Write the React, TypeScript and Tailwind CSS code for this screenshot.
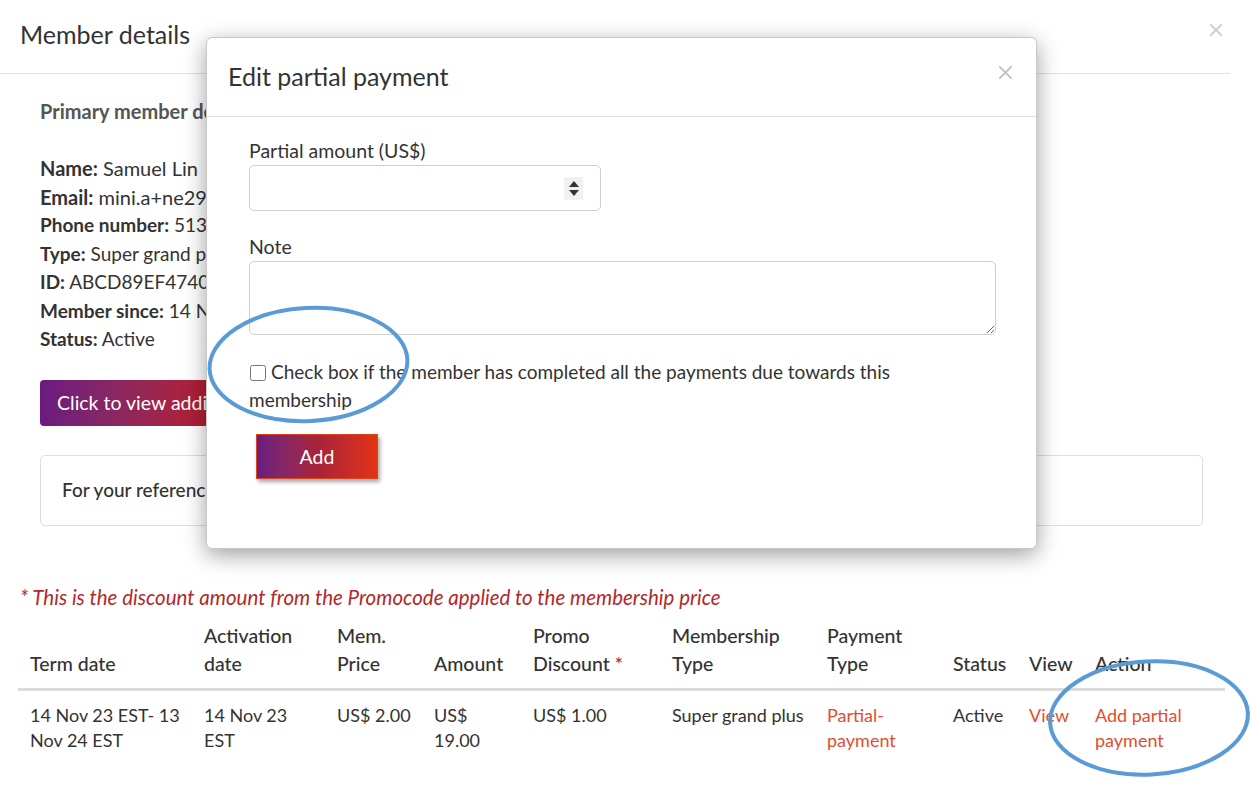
import React from 'react'

const cols = [174, 133, 97, 99, 139, 155, 126, 76, 66, 142]

function CloseIcon({ className }: { className?: string }) {
  return (
    <svg className={className} viewBox="0 0 16 16" fill="none" stroke="currentColor" strokeWidth={2.2} strokeLinecap="round">
      <path d="M2 2l12 12M14 2L2 14" />
    </svg>
  )
}

function EditPartialPaymentModal() {
  return (
    <div className="absolute left-[206px] top-[37px] w-[831px] h-[512px] bg-white rounded-[6px] border border-[#c8c8c8] shadow-[0_6px_22px_rgba(0,0,0,0.38)] flex flex-col">
      {/* Header */}
      <div className="h-[79px] flex items-center justify-between pl-[21px] pr-[19px] border-b border-[#e2e2e2] flex-shrink-0">
        <h2 className="text-[25px] text-[#333] leading-none -mt-[2px]">Edit partial payment</h2>
        <button className="text-[#c2c2c2] p-1" aria-label="Close">
          <CloseIcon className="w-[15px] h-[15px] -mt-[9px]" />
        </button>
      </div>

      {/* Body */}
      <div className="px-[42px] pt-[20px] text-[19.5px] text-[#333]">
        <label className="block leading-[28px]">Partial amount (US$)</label>
        <div className="w-[352px] h-[46px] flex items-center justify-end border border-[#cfcfcf] rounded-[5px] pr-[17px]">
          <div className="w-[19px] h-[23px] bg-[#f1f1f1] flex flex-col items-center justify-center gap-[3px]">
            <svg className="w-[10px] h-[6px]" viewBox="0 0 10 6"><path d="M5 0L10 6H0z" fill="#333" /></svg>
            <svg className="w-[10px] h-[6px]" viewBox="0 0 10 6"><path d="M0 0h10L5 6z" fill="#333" /></svg>
          </div>
        </div>

        <label className="block leading-[28px] mt-[22px]">Note</label>
        <textarea className="block w-[747px] h-[74px] border border-[#cfcfcf] rounded-[5px] outline-none" />

        <p className="mt-[23px] leading-[28px] w-[747px] text-[19px]">
          <input type="checkbox" className="w-[16px] h-[16px] align-[-2px] mr-[5px] ml-[1px]" />
          Check box if the member has completed all the payments due towards this
          <br />
          membership
        </p>

        <button className="mt-[20px] ml-[7px] w-[122px] h-[45px] text-white text-[19.5px] bg-gradient-to-r from-[#6b1a82] via-[#a82238] to-[#e2330c] border border-[#d9461c] shadow-[2px_3px_4px_rgba(0,0,0,0.35)]">
          Add
        </button>
      </div>
    </div>
  )
}

export default function App() {
  return (
    <div className="relative w-[1251px] h-[785px] overflow-hidden bg-white font-['Lato','Noto_Sans',sans-serif] text-[#333]">
      <div className="w-[1230px]">
        {/* Page header */}
        <div className="h-[74px] flex items-center justify-between pl-[20px] pr-[7px] border-b border-[#e0e0e0]">
          <h1 className="text-[25px] leading-none -mt-[4px]">Member details</h1>
          <CloseIcon className="w-[14px] h-[14px] text-[#cfcfcf] -mt-[14px]" />
        </div>

        {/* Primary member details */}
        <div className="px-[40px] pt-[23px] text-[19px]">
          <h3 className="text-[20px] font-bold text-[#555] leading-[28px]">Primary member details</h3>
          <div className="mt-[29px] leading-[28.5px]">
            <p className="text-[20px]"><span className="font-bold">Name:</span> Samuel Lin</p>
            <p className="text-[20px]"><span className="font-bold">Email:</span> mini.a+ne29@example.com</p>
            <p><span className="font-bold">Phone number:</span> 5131234567</p>
            <p><span className="font-bold">Type:</span> Super grand plus</p>
            <p><span className="font-bold">ID:</span> ABCD89EF4740</p>
            <p><span className="font-bold">Member since:</span> 14 Nov 23</p>
            <p><span className="font-bold">Status:</span> Active</p>
          </div>

          <button className="mt-[26px] h-[46px] px-[17px] rounded-[4px] text-white text-[19.5px] bg-gradient-to-r from-[#6b1a80] via-[#b01f34] to-[#d8321a]">
            Click to view additional members
          </button>

          <div className="mt-[29px] h-[71px] w-[1163px] border border-[#dedede] rounded-[5px] flex items-center px-[21px]">
            <p className="font-medium text-[19px]">For your reference, the membership history is listed below</p>
          </div>
        </div>

        {/* Membership table */}
        <div className="pl-[18px] pr-[5px] text-[18px]">
          <p className="mt-[57px] pl-[2px] italic text-[20.5px] text-[#b3282a] leading-[28px]">
            * This is the discount amount from the Promocode applied to the membership price
          </p>

          <table className="mt-[11px] table-fixed w-[1207px] border-collapse">
            <colgroup>
              {cols.map((w, i) => (
                <col key={i} style={{ width: w }} />
              ))}
            </colgroup>
            <thead>
              <tr className="border-b-[3px] border-[#dcdcdc] text-left align-bottom text-[19.5px]">
                <th className="font-medium leading-[28px] pl-[12px] pb-[10px]">Term date</th>
                <th className="font-medium leading-[28px] pl-[12px] pb-[10px]">Activation<br />date</th>
                <th className="font-medium leading-[28px] pl-[12px] pb-[10px]">Mem.<br />Price</th>
                <th className="font-medium leading-[28px] pl-[12px] pb-[10px]">Amount</th>
                <th className="font-medium leading-[28px] pl-[12px] pb-[10px]">Promo<br />Discount <span className="text-[#c0262c]">*</span></th>
                <th className="font-medium leading-[28px] pl-[12px] pb-[10px]">Membership<br />Type</th>
                <th className="font-medium leading-[28px] pl-[12px] pb-[10px]">Payment<br />Type</th>
                <th className="font-medium leading-[28px] pl-[12px] pb-[10px]">Status</th>
                <th className="font-medium leading-[28px] pl-[12px] pb-[10px]">View</th>
                <th className="font-medium leading-[28px] pl-[12px] pb-[10px]">Action</th>
              </tr>
            </thead>
            <tbody>
              <tr className="align-top leading-[25px]">
                <td className="pl-[12px] pr-[10px] pt-[12px]">14 Nov 23 EST- 13 Nov 24 EST</td>
                <td className="pl-[12px] pr-[6px] pt-[12px]">14 Nov 23 EST</td>
                <td className="pl-[12px] pt-[12px]">US$ 2.00</td>
                <td className="pl-[12px] pt-[12px]">US$<br />19.00</td>
                <td className="pl-[12px] pt-[12px]">US$ 1.00</td>
                <td className="pl-[12px] pt-[12px]">Super grand plus</td>
                <td className="pl-[12px] pt-[12px] text-[#e44d2b]">Partial-<br />payment</td>
                <td className="pl-[12px] pt-[12px]">Active</td>
                <td className="pl-[12px] pt-[12px] text-[#e44d2b]">View</td>
                <td className="pl-[12px] pt-[12px] text-[#e44d2b]">Add partial<br />payment</td>
              </tr>
            </tbody>
          </table>
        </div>
      </div>

      <EditPartialPaymentModal />

      {/* Annotation rings */}
      <svg className="absolute inset-0 pointer-events-none" width="1251" height="785" viewBox="0 0 1251 785" fill="none">
        <ellipse cx="308.5" cy="364.5" rx="99" ry="56.5" stroke="#5b9bd5" strokeWidth="4" transform="rotate(-3 308.5 364.5)" />
        <ellipse cx="1149" cy="718" rx="99" ry="56.5" stroke="#5b9bd5" strokeWidth="4" transform="rotate(-3 1149 718)" />
      </svg>
    </div>
  )
}
